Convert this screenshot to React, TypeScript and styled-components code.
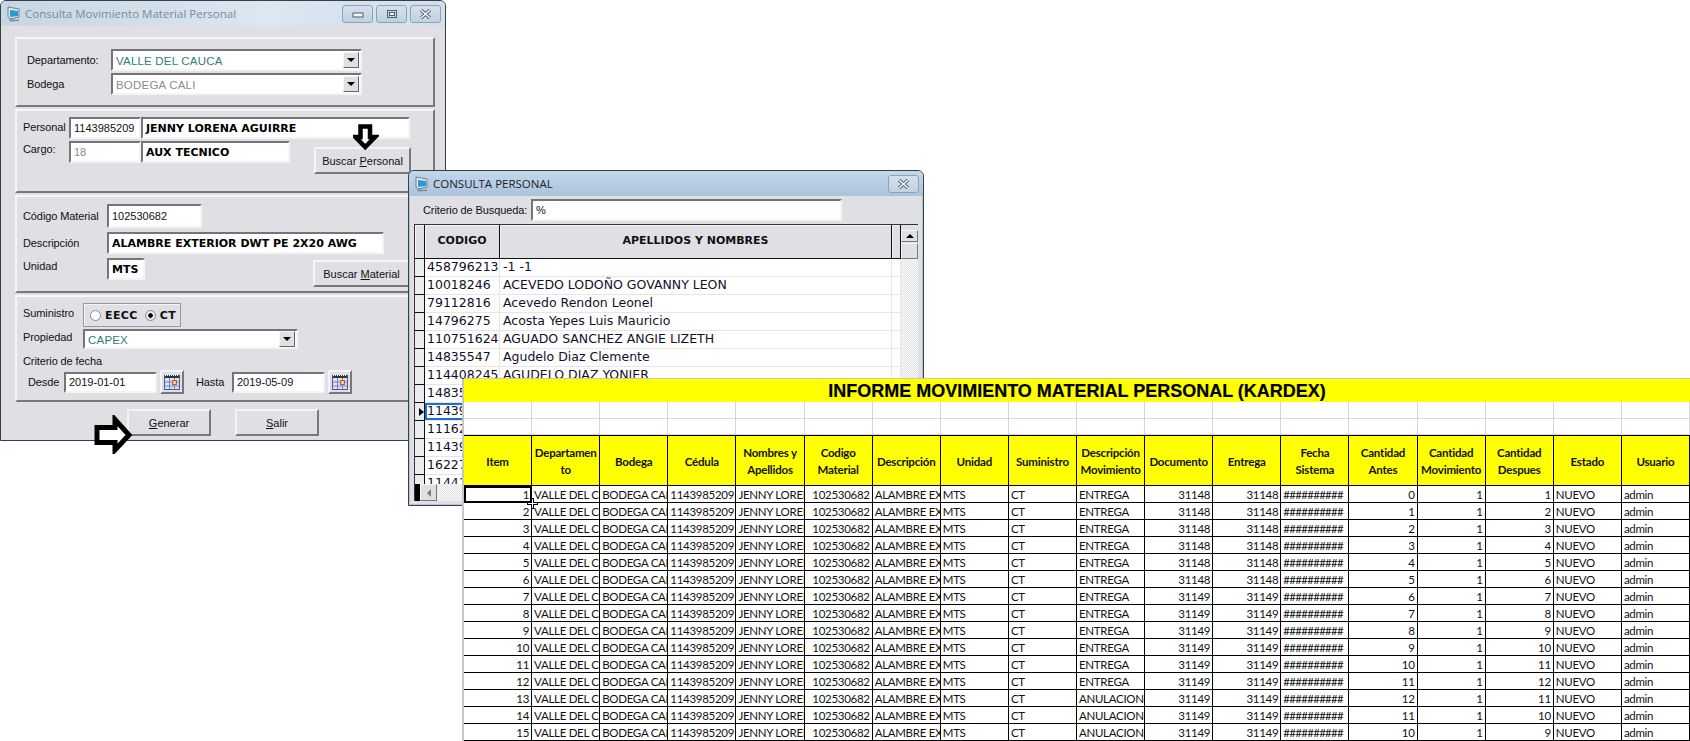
import React from 'react';
import styled, { createGlobalStyle, css } from 'styled-components';

const GlobalStyle = createGlobalStyle`
  html, body {
    margin: 0;
    padding: 0;
    width: 1690px;
    height: 741px;
    overflow: hidden;
    background: #fff;
  }
  #root {
    position: relative;
    width: 1690px;
    height: 741px;
    font-family: 'Liberation Sans', Arial, sans-serif;
    font-size: 11px;
    color: #111;
  }
`;

const face = '#dfdfe4';
const hatch = 'repeating-conic-gradient(#e2e2e6 0 25%, #fafafa 0 50%) 0 0 / 2px 2px';

const sunken = css`
  border-style: solid;
  border-width: 2px;
  border-color: #74747a #f4f4f6 #f4f4f6 #74747a;
  background: #fff;
  box-sizing: border-box;
`;

const Window = styled.section<{ $left: number; $top: number; $width: number; $height: number; $z: number; $frame: string }>`
  position: absolute;
  left: ${(p) => p.$left}px;
  top: ${(p) => p.$top}px;
  width: ${(p) => p.$width}px;
  height: ${(p) => p.$height}px;
  z-index: ${(p) => p.$z};
  box-sizing: border-box;
  display: flex;
  flex-direction: column;
  background: ${face};
  border: 1px solid #3b3f44;
  border-radius: 6px 6px 0 0;
  box-shadow: inset 0 0 0 1px ${(p) => p.$frame};
  overflow: hidden;
`;

const TitleBar = styled.header<{ $active?: boolean }>`
  flex: none;
  height: 25px;
  display: flex;
  align-items: center;
  padding: 0 4px 0 5px;
  background: ${(p) =>
    p.$active
      ? 'linear-gradient(#c4d7ea, #a9c3dd)'
      : 'linear-gradient(90deg, #c6d6e4, #dbe7f1 60%, #cfdfec)'};
`;

const TitleText = styled.span<{ $active?: boolean }>`
  flex: 1;
  margin-left: 3px;
  font-family: 'Open Sans', sans-serif;
  font-size: 11.5px;
  white-space: nowrap;
  color: ${(p) => (p.$active ? '#1d2127' : '#7d8992')};
`;

const CaptionButton = styled.span`
  width: 31px;
  height: 18px;
  margin-left: 3px;
  display: flex;
  align-items: center;
  justify-content: center;
  box-sizing: border-box;
  border: 1px solid #8ea2b4;
  border-radius: 3px;
  background: linear-gradient(#d4e1ec, #bfd1e0);
`;

const FormBody = styled.div`
  flex: 1;
  display: flex;
  flex-direction: column;
  padding: 11px 10px 0 14px;
`;

const Panel = styled.div<{ $height: number }>`
  height: ${(p) => p.$height}px;
  box-sizing: border-box;
  margin-bottom: 2px;
  border-style: solid;
  border-width: 2px;
  border-color: #f6f6f8 #77777c #77777c #f6f6f8;
  display: flex;
  flex-direction: column;
`;

const PanelOne = styled(Panel)`
  padding: 10px 0 0 10px;
  gap: 2px;
`;

const PanelTwo = styled(Panel)`
  padding: 6px 0 0 6px;
  gap: 2px;
`;

const PanelThree = styled(Panel)`
  padding: 7px 0 0 6px;
  gap: 4px;
`;

const PanelFour = styled(Panel)`
  padding: 6px 0 0 6px;
  gap: 2px;
`;

const Row = styled.div<{ $indent?: number; $top?: number }>`
  display: flex;
  align-items: center;
  padding-left: ${(p) => p.$indent ?? 0}px;
  margin-top: ${(p) => p.$top ?? 0}px;
`;

const TopRow = styled(Row)`
  align-items: flex-start;
`;

const Label = styled.span<{ $width: number; $lift?: number }>`
  flex: none;
  width: ${(p) => p.$width}px;
  margin-bottom: ${(p) => p.$lift ?? 0}px;
  white-space: nowrap;
  letter-spacing: -0.1px;
`;

const TopLabel = styled(Label)`
  line-height: 16px;
`;

const Field = styled.div<{ $width: number; $height?: number; $bold?: boolean; $tone?: string }>`
  ${sunken}
  flex: none;
  width: ${(p) => p.$width}px;
  height: ${(p) => p.$height ?? 22}px;
  display: flex;
  align-items: center;
  padding-left: 3px;
  white-space: nowrap;
  overflow: hidden;
  color: ${(p) => p.$tone ?? '#111'};
  ${(p) =>
    p.$bold &&
    css`
      font-family: 'DejaVu Sans', sans-serif;
      font-weight: 700;
      font-size: 11px;
      color: #000;
    `}
`;

const ComboBox = styled(Field)`
  padding: 1px 1px 0 3px;
  justify-content: space-between;
  font-size: 11.5px;
  letter-spacing: 0.2px;
`;

const ComboArrow = styled.span`
  width: 16px;
  height: 16px;
  flex: none;
  margin-top: -1px;
  display: flex;
  align-items: center;
  justify-content: center;
  box-sizing: border-box;
  background: ${face};
  border: 1px solid;
  border-color: #f6f6f8 #66666b #66666b #f6f6f8;

  &::after {
    content: '';
    border: 4px solid transparent;
    border-top-color: #000;
    border-bottom: 0;
  }
`;

const Button = styled.div<{ $width: number; $left?: number; $top?: number }>`
  flex: none;
  width: ${(p) => p.$width}px;
  height: 27px;
  margin-left: ${(p) => p.$left ?? 0}px;
  margin-top: ${(p) => p.$top ?? 0}px;
  box-sizing: border-box;
  display: flex;
  align-items: center;
  justify-content: center;
  background: ${face};
  border-style: solid;
  border-width: 2px;
  border-color: #f4f4f6 #77777c #77777c #f4f4f6;
  white-space: nowrap;
`;

const RadioBox = styled.div`
  flex: none;
  width: 98px;
  height: 24px;
  box-sizing: border-box;
  display: flex;
  align-items: center;
  gap: 5px;
  padding-left: 6px;
  border: 1px solid #98989c;
  box-shadow: inset 1px 1px 0 #f4f4f6;
  font-family: 'DejaVu Sans', sans-serif;
  font-weight: 700;
  font-size: 11px;
  letter-spacing: 0.4px;
`;

const RadioDot = styled.span<{ $on?: boolean }>`
  width: 11px;
  height: 11px;
  border-radius: 50%;
  box-sizing: border-box;
  border: 1px solid #8a8a8e;
  background: ${(p) => (p.$on ? 'radial-gradient(#000 0 2px, #e9e9ee 2.5px)' : '#fff')};
  margin: 0 -1px 0 ${(p) => (p.$on ? 2 : 0)}px;
`;

const DateGap = styled.span`
  flex: none;
  width: 12px;
`;

const CalendarButton = styled(Button)`
  width: 24px;
  height: 24px;
  margin-left: 3px;
`;

const DateField = styled(Field)`
  height: 21px;
`;

const FooterRow = styled.div`
  display: flex;
  gap: 24px;
  padding: 5px 0 0 112px;
`;

const BlockArrow = styled.svg<{ $left: number; $top: number; $width: number; $height: number }>`
  position: absolute;
  left: ${(p) => p.$left}px;
  top: ${(p) => p.$top}px;
  width: ${(p) => p.$width}px;
  height: ${(p) => p.$height}px;
  z-index: 2;
`;

const SearchBar = styled.div`
  flex: none;
  display: flex;
  align-items: center;
  height: 28px;
  padding-left: 14px;
`;

const GridFrame = styled.div`
  flex: 1;
  margin: 0 5px 4px 5px;
  border-top: 1px solid #333;
  border-left: 1px solid #333;
  background: #fff;
  display: flex;
  flex-direction: column;
  min-height: 0;
`;

const GridMain = styled.div`
  flex: 1;
  min-height: 0;
  display: flex;
`;

const GridColumnArea = styled.div`
  flex: 1;
  min-width: 0;
  display: flex;
  flex-direction: column;
  overflow: hidden;
`;

const columns = '10px 75px 1fr 9px';

const GridHeader = styled.div`
  flex: none;
  height: 33px;
  display: grid;
  grid-template-columns: ${columns};
  background: ${face};
  border-bottom: 1px solid #111;
  font-family: 'DejaVu Sans', sans-serif;
  font-weight: 700;
  font-size: 11px;
`;

const HeaderCell = styled.div`
  display: flex;
  align-items: center;
  justify-content: center;
  padding-bottom: 3px;
  border-right: 1px solid #111;
  box-shadow: inset 1px 1px 0 #f4f4f6;
`;

const GridRow = styled.div`
  flex: none;
  height: 18px;
  box-sizing: border-box;
  display: grid;
  grid-template-columns: ${columns};
  border-bottom: 1px solid #e6e6e6;
  font-family: 'DejaVu Sans', sans-serif;
  font-size: 12.5px;
  line-height: 16px;
  color: #10102a;
  white-space: nowrap;
`;

const RowMark = styled.div<{ $current?: boolean }>`
  background: #ececef;
  border-right: 1px solid #111;
  border-bottom: 1px solid #111;
  margin-bottom: -1px;
  display: flex;
  align-items: center;
  justify-content: flex-end;

  ${(p) =>
    p.$current &&
    css`
      &::after {
        content: '';
        border: 4px solid transparent;
        border-left: 5px solid #000;
        border-right: 0;
      }
    `}
`;

const GridCell = styled.div<{ $selected?: boolean }>`
  padding-left: 2px;
  overflow: hidden;
  border-right: 1px solid #e6e6e6;
  ${(p) =>
    p.$selected &&
    css`
      outline: 2px solid #1a6fd0;
      outline-offset: -2px;
    `}
`;

const NameCell = styled(GridCell)`
  padding-left: 3px;
`;

const VerticalBar = styled.div`
  flex: none;
  width: 17px;
  padding-top: 5px;
  display: flex;
  flex-direction: column;
  gap: 1px;
  background: linear-gradient(${face}, ${face}) 0 0 / 100% 34px no-repeat, ${hatch};
`;

const ScrollButton = styled.div<{ $height: number }>`
  flex: none;
  height: ${(p) => p.$height}px;
  box-sizing: border-box;
  display: flex;
  align-items: center;
  justify-content: center;
  background: ${face};
  border: 1px solid;
  border-color: #f6f6f8 #77777c #77777c #f6f6f8;
`;

const ThumbUp = styled.span`
  border: 4px solid transparent;
  border-bottom: 4px solid #000;
  border-top: 0;
`;

const HorizontalBar = styled.div`
  flex: none;
  height: 17px;
  display: flex;
  background: ${hatch};
`;

const BlackStub = styled.div`
  width: 5px;
  background: #000;
`;

const LeftButton = styled(ScrollButton)`
  width: 17px;

  &::after {
    content: '';
    border: 4px solid transparent;
    border-right: 4px solid #7c7c80;
    border-left: 0;
  }
`;

const Sheet = styled.section`
  position: absolute;
  left: 464px;
  top: 379px;
  width: 1226px;
  height: 362px;
  z-index: 5;
  background: #fff;
  box-shadow: -2px 0 0 #c6c6c6, 0 -1px 0 #c6c6c6;
  display: flex;
  flex-direction: column;
`;

const SheetTitle = styled.h1`
  flex: none;
  margin: 0;
  height: 23px;
  line-height: 24px;
  text-align: center;
  background: #ffff00;
  color: #000;
  font-family: 'Liberation Sans', Arial, sans-serif;
  font-size: 18px;
  font-weight: 700;
  -webkit-text-stroke: 0.2px #000;
  white-space: nowrap;
`;

const SheetGrid = styled.div<{ $rows: string }>`
  flex: none;
  display: grid;
  grid-template-columns: repeat(18, 1fr);
  grid-auto-rows: ${(p) => p.$rows};
`;

const BlankCell = styled.div`
  box-sizing: border-box;
  border-right: 1px solid #d6d6d6;
  border-bottom: 1px solid #d6d6d6;
`;

const HeadCell = styled.div`
  box-sizing: border-box;
  display: flex;
  align-items: center;
  justify-content: center;
  text-align: center;
  padding-top: 1px;
  background: #ffff00;
  border-right: 1px solid #000;
  border-top: 1px solid #000;
  border-bottom: 1px solid #000;
  font-family: Lato, 'Liberation Sans', sans-serif;
  font-weight: 700;
  font-size: 11.5px;
  letter-spacing: -0.2px;
  line-height: 17px;
  color: #111;
  white-space: pre-line;
`;

const DataCell = styled.div<{ $right?: boolean; $selected?: boolean; $tight?: boolean }>`
  box-sizing: border-box;
  padding: 0 2px;
  border-right: 1px solid #000;
  border-bottom: 1px solid #000;
  font-family: Lato, 'Liberation Sans', sans-serif;
  font-size: 11.5px;
  letter-spacing: ${(p) => (p.$tight ? -0.7 : -0.3)}px;
  line-height: 18px;
  color: #111;
  white-space: nowrap;
  overflow: hidden;
  text-align: ${(p) => (p.$right ? 'right' : 'left')};
  ${(p) =>
    p.$selected &&
    css`
      outline: 2px solid #000;
      outline-offset: -2px;
    `}
`;

const FillHandle = styled.svg`
  position: absolute;
  left: 63px;
  top: 119px;
  width: 11px;
  height: 11px;
`;

const AppIcon = () => (
  <svg width="16" height="16" viewBox="0 0 16 16">
    <path d="M2 1 L13 3 V11 L4 13 L2 11 Z" fill="#dfe8ee" stroke="#6d7f8d" />
    <path d="M4 4 L12 5 V10 L4 11 Z" fill="#2a9ad6" />
    <path d="M3 13 L11 14 L13 13 L13 15 L4 15.5 Z" fill="#7c8d98" />
  </svg>
);

const MinimizeGlyph = () => (
  <svg width="12" height="8" viewBox="0 0 12 8">
    <rect x="1" y="3" width="10" height="4" fill="#f4f6f8" stroke="#4e5a66" />
  </svg>
);

const MaximizeGlyph = () => (
  <svg width="12" height="10" viewBox="0 0 12 10">
    <rect x="1.5" y="1.5" width="9" height="7" fill="none" stroke="#4e5a66" />
    <rect x="3.5" y="3.5" width="5" height="3" fill="#f4f6f8" stroke="#4e5a66" />
  </svg>
);

const CloseGlyph = () => (
  <svg width="13" height="10" viewBox="0 0 13 10">
    <path d="M2 1 L11 9 M11 1 L2 9" stroke="#55626e" strokeWidth="3.4" />
    <path d="M2 1 L11 9 M11 1 L2 9" stroke="#f4f6f8" strokeWidth="1.6" />
  </svg>
);

const CalendarIcon = () => (
  <svg width="16" height="16" viewBox="0 0 16 16">
    <rect x="0.5" y="1.5" width="15" height="14" fill="#d9e2f2" stroke="#4a5a9c" />
    <rect x="1" y="1" width="14" height="3" fill="#333" />
    <path d="M1 1.5 H15" stroke="#fff" strokeDasharray="1 1" />
    <path d="M5.5 4 V15 M10.5 4 V15 M1 8 H15 M1 12 H15" stroke="#7285c4" />
    <rect x="8.5" y="6.5" width="4" height="4" fill="#f6c9a8" stroke="#e0501a" />
  </svg>
);

type CaptionProps = { title: string; active?: boolean; children: React.ReactNode };

const Caption = ({ title, active, children }: CaptionProps) => (
  <TitleBar $active={active}>
    <AppIcon />
    <TitleText $active={active}>{title}</TitleText>
    {children}
  </TitleBar>
);

const MaterialForm = () => (
  <Window $left={0} $top={0} $width={446} $height={441} $z={1} $frame="#cfdfec">
    <Caption title="Consulta Movimiento Material Personal">
      <CaptionButton>
        <MinimizeGlyph />
      </CaptionButton>
      <CaptionButton>
        <MaximizeGlyph />
      </CaptionButton>
      <CaptionButton>
        <CloseGlyph />
      </CaptionButton>
    </Caption>
    <FormBody>
      <PanelOne $height={70}>
        <Row>
          <Label $width={84}>Departamento:</Label>
          <ComboBox $width={251} $tone="#2f7d7a">
            VALLE DEL CAUCA
            <ComboArrow />
          </ComboBox>
        </Row>
        <Row>
          <Label $width={84}>Bodega</Label>
          <ComboBox $width={251} $tone="#8c8c8c">
            BODEGA CALI
            <ComboArrow />
          </ComboBox>
        </Row>
      </PanelOne>
      <PanelTwo $height={84}>
        <Row>
          <Label $width={46} $lift={2}>
            Personal
          </Label>
          <Field $width={72}>1143985209</Field>
          <Field $width={269} $bold>
            JENNY LORENA AGUIRRE
          </Field>
        </Row>
        <TopRow>
          <TopLabel $width={46}>Cargo:</TopLabel>
          <Field $width={72} $tone="#8c8c8c">
            18
          </Field>
          <Field $width={149} $bold>
            AUX TECNICO
          </Field>
          <Button $width={97} $left={24} $top={6}>
            <span>
              Buscar <u>P</u>ersonal
            </span>
          </Button>
        </TopRow>
      </PanelTwo>
      <PanelThree $height={98}>
        <Row>
          <Label $width={84}>Código Material</Label>
          <Field $width={95} $height={24}>
            102530682
          </Field>
        </Row>
        <Row>
          <Label $width={84}>Descripción</Label>
          <Field $width={277} $bold>
            ALAMBRE EXTERIOR DWT PE 2X20 AWG
          </Field>
        </Row>
        <TopRow>
          <TopLabel $width={84}>Unidad</TopLabel>
          <Field $width={38} $bold>
            MTS
          </Field>
          <Button $width={97} $left={168} $top={2}>
            <span>
              Buscar <u>M</u>aterial
            </span>
          </Button>
        </TopRow>
      </PanelThree>
      <PanelFour $height={107}>
        <Row>
          <Label $width={60} $lift={4}>
            Suministro
          </Label>
          <RadioBox>
            <RadioDot />
            EECC
            <RadioDot $on />
            CT
          </RadioBox>
        </Row>
        <Row>
          <Label $width={60} $lift={4}>
            Propiedad
          </Label>
          <ComboBox $width={215} $height={20} $tone="#2f7d7a">
            CAPEX
            <ComboArrow />
          </ComboBox>
        </Row>
        <Row $top={4}>
          <Label $width={100}>Criterio de fecha</Label>
        </Row>
        <Row $indent={5} $top={1}>
          <Label $width={36}>Desde</Label>
          <DateField $width={93}>2019-01-01</DateField>
          <CalendarButton $width={24}>
            <CalendarIcon />
          </CalendarButton>
          <DateGap />
          <Label $width={36}>Hasta</Label>
          <DateField $width={93}>2019-05-09</DateField>
          <CalendarButton $width={24}>
            <CalendarIcon />
          </CalendarButton>
        </Row>
      </PanelFour>
      <FooterRow>
        <Button $width={84}>
          <span>
            <u>G</u>enerar
          </span>
        </Button>
        <Button $width={84}>
          <span>
            <u>S</u>alir
          </span>
        </Button>
      </FooterRow>
    </FormBody>
  </Window>
);

const people: [string, string][] = [
  ['458796213', '-1 -1'],
  ['10018246', 'ACEVEDO LODOÑO GOVANNY LEON'],
  ['79112816', 'Acevedo Rendon Leonel'],
  ['14796275', 'Acosta Yepes Luis Mauricio'],
  ['110751624', 'AGUADO SANCHEZ ANGIE LIZETH'],
  ['14835547', 'Agudelo Diaz Clemente'],
  ['114408245', 'AGUDELO DIAZ YONIER'],
  ['14835', ''],
  ['11439', ''],
  ['11162', ''],
  ['11439', ''],
  ['16227', ''],
  ['11441', ''],
];

const PersonSearch = () => (
  <Window $left={408} $top={170} $width={516} $height={336} $z={3} $frame="#a9c8e6">
    <Caption title="CONSULTA PERSONAL" active>
      <CaptionButton>
        <CloseGlyph />
      </CaptionButton>
    </Caption>
    <SearchBar>
      <Label $width={108}>Criterio de Busqueda:</Label>
      <Field $width={311}>%</Field>
    </SearchBar>
    <GridFrame>
      <GridMain>
        <GridColumnArea>
          <GridHeader>
            <HeaderCell />
            <HeaderCell>CODIGO</HeaderCell>
            <HeaderCell>APELLIDOS Y NOMBRES</HeaderCell>
            <HeaderCell />
          </GridHeader>
          {people.map(([code, name], index) => (
            <GridRow key={index}>
              <RowMark $current={index === 8} />
              <GridCell $selected={index === 8}>{code}</GridCell>
              <NameCell>{name}</NameCell>
              <GridCell />
            </GridRow>
          ))}
        </GridColumnArea>
        <VerticalBar>
          <ScrollButton $height={12}>
            <ThumbUp />
          </ScrollButton>
          <ScrollButton $height={16} />
        </VerticalBar>
      </GridMain>
      <HorizontalBar>
        <BlackStub />
        <LeftButton $height={17} />
      </HorizontalBar>
    </GridFrame>
  </Window>
);

const headings = [
  'Item',
  'Departamen\nto',
  'Bodega',
  'Cédula',
  'Nombres y\nApellidos',
  'Codigo\nMaterial',
  'Descripción',
  'Unidad',
  'Suministro',
  'Descripción\nMovimiento',
  'Documento',
  'Entrega',
  'Fecha\nSistema',
  'Cantidad\nAntes',
  'Cantidad\nMovimiento',
  'Cantidad\nDespues',
  'Estado',
  'Usuario',
];

const stock: [number, number][] = [
  [0, 1],
  [1, 2],
  [2, 3],
  [3, 4],
  [4, 5],
  [5, 6],
  [6, 7],
  [7, 8],
  [8, 9],
  [9, 10],
  [10, 11],
  [11, 12],
  [12, 11],
  [11, 10],
  [10, 9],
];

const KardexSheet = () => (
  <Sheet>
    <SheetTitle>INFORME MOVIMIENTO MATERIAL PERSONAL (KARDEX)</SheetTitle>
    <SheetGrid $rows="16.5px">
      {Array.from({ length: 36 }, (_, index) => (
        <BlankCell key={index} />
      ))}
    </SheetGrid>
    <SheetGrid $rows="51px">
      {headings.map((heading) => (
        <HeadCell key={heading}>{heading}</HeadCell>
      ))}
    </SheetGrid>
    <SheetGrid $rows="17px">
      {stock.map(([before, after], index) => {
        const doc = index < 6 ? '31148' : '31149';
        return (
          <React.Fragment key={index}>
            <DataCell $right $selected={index === 0}>
              {index + 1}
            </DataCell>
            <DataCell>VALLE DEL CAUCA</DataCell>
            <DataCell>BODEGA CALI</DataCell>
            <DataCell $right>1143985209</DataCell>
            <DataCell>JENNY LORENA AGUIRRE</DataCell>
            <DataCell $right>102530682</DataCell>
            <DataCell>ALAMBRE EXTERIOR</DataCell>
            <DataCell>MTS</DataCell>
            <DataCell>CT</DataCell>
            <DataCell>{index < 12 ? 'ENTREGA' : 'ANULACION'}</DataCell>
            <DataCell $right>{doc}</DataCell>
            <DataCell $right>{doc}</DataCell>
            <DataCell $tight>##########</DataCell>
            <DataCell $right>{before}</DataCell>
            <DataCell $right>1</DataCell>
            <DataCell $right>{after}</DataCell>
            <DataCell>NUEVO</DataCell>
            <DataCell>admin</DataCell>
          </React.Fragment>
        );
      })}
    </SheetGrid>
    <FillHandle viewBox="0 0 11 11">
      <path d="M5.5 0 V11 M0 5.5 H11" stroke="#000" strokeWidth="3" />
      <path d="M5.5 1 V10 M1 5.5 H10" stroke="#fff" strokeWidth="1" />
    </FillHandle>
  </Sheet>
);

const App = () => (
  <>
    <GlobalStyle />
    <MaterialForm />
    <PersonSearch />
    <KardexSheet />
    <BlockArrow $left={353} $top={124} $width={26} $height={27} viewBox="0 0 26 27">
      <path d="M7.5 2.5 H17 V13 H22 L12.2 23 L2.5 13 H7.5 Z" fill="#fff" stroke="#000" strokeWidth="4.5" />
    </BlockArrow>
    <BlockArrow $left={94} $top={415} $width={40} $height={39} viewBox="0 0 40 39">
      <path d="M3 12.5 H21 V4.5 L35 20 L21 35 V27.5 H3 Z" fill="#fff" stroke="#000" strokeWidth="5" />
    </BlockArrow>
  </>
);

export default App;
